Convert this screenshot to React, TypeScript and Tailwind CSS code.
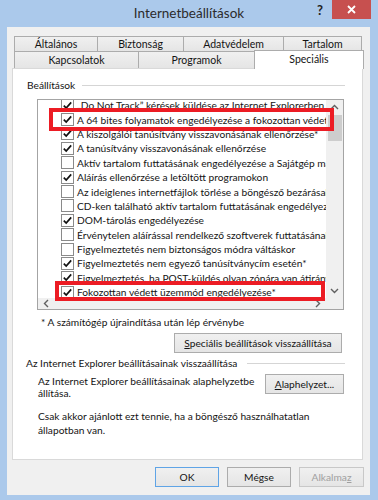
import React from "react";

const items = [
  { t: "„Do Not Track” kérések küldése az Internet Explorerben felkeresett webhelyeknek", c: true },
  { t: "A 64 bites folyamatok engedélyezése a fokozottan védett üzemmódban*", c: true },
  { t: "A kiszolgálói tanúsítvány visszavonásának ellenőrzése*", c: true },
  { t: "A tanúsítvány visszavonásának ellenőrzése", c: true },
  { t: "Aktív tartalom futtatásának engedélyezése a Sajátgép mappában lévő fájlokban*", c: false },
  { t: "Aláírás ellenőrzése a letöltött programokon", c: true },
  { t: "Az ideiglenes internetfájlok törlése a böngésző bezárásakor", c: false },
  { t: "CD-ken található aktív tartalom futtatásának engedélyezése a Sajátgépen*", c: false },
  { t: "DOM-tárolás engedélyezése", c: true },
  { t: "Érvénytelen aláírással rendelkező szoftverek futtatásának vagy telepítésének engedélyezése", c: false },
  { t: "Figyelmeztetés nem biztonságos módra váltáskor", c: false },
  { t: "Figyelmeztetés nem egyező tanúsítványcím esetén*", c: true },
  { t: "Figyelmeztetés, ha POST-küldés olyan zónára van átirányítva, amely nem engedélyezi", c: true },
  { t: "Fokozottan védett üzemmód engedélyezése*", c: true },
];

function Checkbox({ checked }: { checked: boolean }) {
  return (
    <div className="w-[13px] h-[13px] shrink-0 border border-[#8a8a8a] bg-white flex items-center justify-center">
      {checked && (
        <svg width="11" height="11" viewBox="0 0 11 11">
          <polyline points="1.8,5.6 4.2,8 9.2,2.4" fill="none" stroke="#111" strokeWidth="1.7" />
        </svg>
      )}
    </div>
  );
}

function Chevron({ dir }: { dir: "up" | "down" | "left" | "right" }) {
  const pts = {
    up: "1,6 4.5,2.5 8,6",
    down: "1,3 4.5,6.5 8,3",
    left: "6,1 2.5,4.5 6,8",
    right: "3,1 6.5,4.5 3,8",
  }[dir];
  return (
    <svg width="9" height="9" viewBox="0 0 9 9">
      <polyline points={pts} fill="none" stroke="#606060" strokeWidth="1.4" />
    </svg>
  );
}

function Tab({ label, w, selected }: { label: string; w: string; selected?: boolean }) {
  return (
    <div
      className={
        selected
          ? `${w} h-[19px] -mb-[1px] relative z-10 bg-white border border-b-0 border-[#acacac] flex items-center justify-center pb-[2px]`
          : `${w} h-full bg-gradient-to-b from-[#f0f0f0] to-[#e5e5e5] border border-b-0 border-[#acacac] -ml-[1px] first:ml-0 flex items-center justify-center`
      }
    >
      {label}
    </div>
  );
}

function Button({ children, className }: { children: React.ReactNode; className: string }) {
  return (
    <div
      className={`h-[20px] flex items-center justify-center bg-gradient-to-b from-[#f0f0f0] to-[#e5e5e5] border ${className}`}
    >
      {children}
    </div>
  );
}

export default function App() {
  return (
    <div className="relative w-[378px] h-[500px] bg-[#abc9eb] overflow-hidden font-['Lato',sans-serif] text-[10.2px] text-black leading-[14px]">
      {/* Cimsor */}
      <div className="h-[27px] grid grid-cols-[1fr_auto_1fr]">
        <div />
        <div className="pt-[4px] text-[13.5px] leading-[18px] text-[#2b2b2b]">Internetbeállítások</div>
        <div className="flex justify-end items-start pr-[7px]">
          <div className="mt-[3px] mr-[9px] text-[13px] leading-[14px] font-bold text-[#222]">?</div>
          <div className="w-[39px] h-[19px] bg-[#c7504f] flex items-center justify-center">
            <svg width="9" height="9" viewBox="0 0 9 9">
              <path d="M1 1 L8 8 M8 1 L1 8" stroke="white" strokeWidth="1.8" />
            </svg>
          </div>
        </div>
      </div>

      {/* Kliens terulet */}
      <div className="ml-[7px] w-[363px] h-[468px] bg-[#f0f0f0] pt-[9px] text-[#141414]">
        {/* Fulek */}
        <div className="ml-[7px] h-[15px] flex text-[10.5px]">
          <Tab label="Általános" w="w-[84px]" />
          <Tab label="Biztonság" w="w-[87px]" />
          <Tab label="Adatvédelem" w="w-[101px]" />
          <Tab label="Tartalom" w="w-[79px]" />
        </div>
        <div className="ml-[7px] h-[17px] flex items-end text-[10.5px]">
          <Tab label="Kapcsolatok" w="w-[125px]" />
          <Tab label="Programok" w="w-[117px]" />
          <div className="-ml-[1px]">
            <Tab label="Speciális" w="w-[110px]" selected />
          </div>
        </div>

        {/* Panel */}
        <div className="ml-[5px] w-[351px] h-[392px] bg-white border border-[#d9d9d9] pt-[9px]">
          <div className="flex items-center pl-[14px] pr-[17px]">
            <span>Beállítások</span>
            <div className="flex-1 h-px bg-[#d5d5d5] ml-[7px]" />
          </div>

          {/* Lista */}
          <div className="ml-[24px] mt-[7px] w-[307px] h-[211px] border border-[#a4a4a4] flex flex-col">
            <div className="flex flex-1 min-h-0">
              <div className="flex-1 overflow-hidden">
                <div className="-mt-[2px] pl-[23px]">
                  {items.map((it) => (
                    <div key={it.t} className="h-[14.4px] flex items-center gap-[3px] whitespace-nowrap">
                      <Checkbox checked={it.c} />
                      <span>{it.t}</span>
                    </div>
                  ))}
                </div>
              </div>
              <div className="w-[17px] bg-[#f0f0f0] flex flex-col items-center">
                <div className="h-[15px] flex items-center">
                  <Chevron dir="up" />
                </div>
                <div className="w-[14px] h-[26px] bg-[#cdcdcd]" />
                <div className="flex-1" />
                <div className="h-[15px] flex items-center">
                  <Chevron dir="down" />
                </div>
              </div>
            </div>
            <div className="h-[11px] flex bg-[#f0f0f0]">
              <div className="flex-1 flex items-center justify-between px-[4px]">
                <Chevron dir="left" />
                <Chevron dir="right" />
              </div>
              <div className="w-[17px]" />
            </div>
          </div>

          <div className="ml-[28px] mt-[5px]">* A számítógép újraindítása után lép érvénybe</div>

          <div className="flex justify-end pr-[20px] mt-[4px]">
            <Button className="w-[168px] border-[#acacac]">
              <span>
                <span className="underline">S</span>peciális beállítások visszaállítása
              </span>
            </Button>
          </div>

          <div className="flex items-center pl-[13px] pr-[17px] mt-[3px]">
            <span>Az Internet Explorer beállításainak visszaállítása</span>
            <div className="flex-1 h-px bg-[#d5d5d5] ml-[10px]" />
          </div>

          <div className="flex items-start pl-[25px] pr-[18px] mt-[4px]">
            <div className="flex-1 whitespace-nowrap leading-[12px] pt-[1px]">
              Az Internet Explorer beállításainak alaphelyzetbe
              <br />
              állítása.
            </div>
            <Button className="w-[79px] border-[#acacac]">
              <span>
                <span className="underline">A</span>laphelyzet...
              </span>
            </Button>
          </div>

          <div className="pl-[25px] mt-[10px] whitespace-nowrap">
            Csak akkor ajánlott ezt tennie, ha a böngésző használhatatlan
            <br />
            állapotban van.
          </div>
        </div>

        {/* Also gombok */}
        <div className="flex justify-end gap-[8px] mt-[7px] pr-[6px]">
          <Button className="w-[64px] border-[#5fa4e6]">OK</Button>
          <Button className="w-[64px] border-[#acacac]">Mégse</Button>
          <Button className="w-[65px] border-[#c8c8c8] text-[#a0a0a0]">
            <span>
              Alkalma<span className="underline">z</span>
            </span>
          </Button>
        </div>
      </div>

      {/* Jelolo keretek */}
      <div className="absolute left-[49px] top-[108px] w-[285px] h-[23px] border-[4px] border-[#ec1c24]" />
      <div className="absolute left-[55px] top-[281px] w-[270px] h-[20px] border-[4px] border-[#ec1c24]" />
    </div>
  );
}
